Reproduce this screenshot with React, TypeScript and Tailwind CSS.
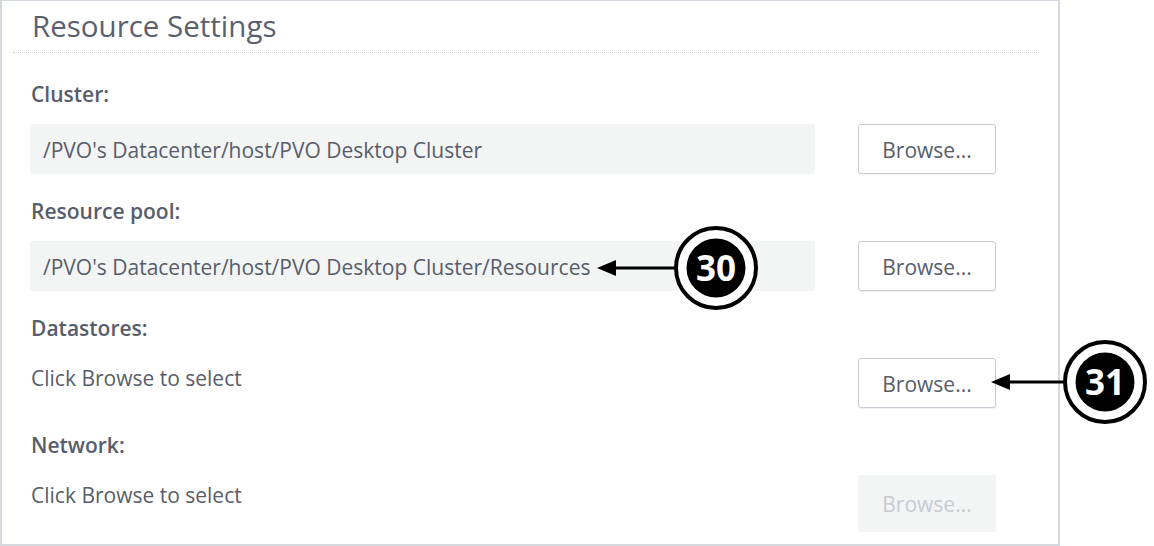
import React from "react";

const font = { fontFamily: '"Open Sans", "Noto Sans", sans-serif' };

function Label({ children }: { children: React.ReactNode }) {
  return (
    <div className="h-[28px] pl-[29px] text-[21px] leading-[28px] font-semibold text-[#575d6b]">
      {children}
    </div>
  );
}

function BrowseButton({ disabled }: { disabled?: boolean }) {
  if (disabled) {
    return (
      <div className="flex h-[57px] w-[138px] items-center justify-center rounded-[3px] bg-[#f3f4f4] pt-[2px] text-[21px] text-[#c6ccd3]">
        Browse...
      </div>
    );
  }
  return (
    <div className="flex h-[50px] w-[138px] items-center justify-center rounded-[3px] border border-[#c9ced4] bg-white pt-[3px] text-[21px] text-[#575d6b] shadow-[0_1px_1px_rgba(0,0,0,0.06)]">
      Browse...
    </div>
  );
}

function InputRow({ value }: { value: string }) {
  return (
    <div className="mt-[16px] flex h-[50px] items-center pl-[28px]">
      <div className="flex h-[50px] w-[785px] items-center rounded-[3px] bg-[#f3f4f4] pl-[13px] pt-[3px] text-[21px] text-[#575d6b]">
        {value}
      </div>
      <div className="ml-[43px]">
        <BrowseButton />
      </div>
    </div>
  );
}

function TextRow({ disabled }: { disabled?: boolean }) {
  return (
    <div className="mt-[16px] flex items-start pl-[29px]">
      <div className="w-[784px] pt-[6px] text-[21px] leading-[28px] text-[#575d6b]">
        Click Browse to select
      </div>
      <div className="ml-[43px]">
        <BrowseButton disabled={disabled} />
      </div>
    </div>
  );
}

function Callout({ cx, cy, label }: { cx: number; cy: number; label: string }) {
  return (
    <g>
      <circle cx={cx} cy={cy} r={40} fill="white" stroke="black" strokeWidth={4} />
      <circle cx={cx} cy={cy} r={29.5} fill="black" />
      <text
        x={cx}
        y={cy + 12.5}
        textAnchor="middle"
        fill="white"
        fontSize="35"
        fontWeight="700"
        fontFamily='"Open Sans", sans-serif'
      >
        {label}
      </text>
    </g>
  );
}

export default function App() {
  return (
    <div className="relative h-[546px] w-[1154px] overflow-hidden bg-white" style={font}>
      <div className="h-[546px] w-[1060px] border-2 border-t-[1px] border-[#d3d9de] bg-white">
        <div className="ml-[11px] mr-[19px] border-b border-dotted border-[#cfcfcf] pb-[6px] pl-[19px] pt-[5px]">
          <div className="text-[29.5px] leading-[40px] text-[#5a606e]">Resource Settings</div>
        </div>
        <div className="pt-[27px]">
          <Label>Cluster:</Label>
          <InputRow value="/PVO's Datacenter/host/PVO Desktop Cluster" />
          <div className="mt-[23px]">
            <Label>Resource pool:</Label>
          </div>
          <InputRow value="/PVO's Datacenter/host/PVO Desktop Cluster/Resources" />
          <div className="mt-[23px]">
            <Label>Datastores:</Label>
          </div>
          <TextRow />
          <div className="mt-[23px]">
            <Label>Network:</Label>
          </div>
          <TextRow disabled />
        </div>
      </div>
      <svg className="pointer-events-none absolute left-0 top-0" width="1154" height="546">
        <line x1="612" y1="268" x2="676" y2="268" stroke="black" strokeWidth="3" />
        <polygon points="597,268 616,260 616,276" fill="black" />
        <Callout cx={716} cy={268} label="30" />
        <line x1="1006" y1="382" x2="1065" y2="382" stroke="black" strokeWidth="3" />
        <polygon points="991,382 1010,374 1010,390" fill="black" />
        <Callout cx={1105} cy={382} label="31" />
      </svg>
    </div>
  );
}
